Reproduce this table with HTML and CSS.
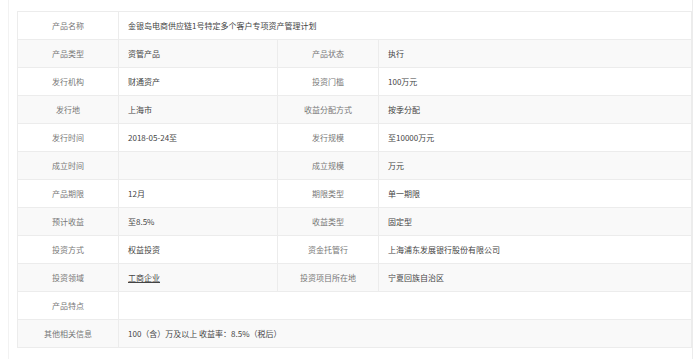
FILE: index.html
```html
<!DOCTYPE html>
<html lang="zh-CN">
    <head>
        <meta charset="UTF-8">
        <meta name="viewport" content="width=device-width, initial-scale=1.0">
        <title>产品详情</title>
        <link rel="stylesheet" href="styles.css">
    </head>
    <body>
        <div class="panel">
            <table class="detail-table">
                <colgroup>
                    <col class="col-label">
                    <col class="col-value">
                    <col class="col-label">
                    <col class="col-value-wide">
                </colgroup>
                <tbody>
                    <tr>
                        <td class="label">产品名称</td>
                        <td colspan="3">金银岛电商供应链1号特定多个客户专项资产管理计划</td>
                    </tr>
                    <tr>
                        <td class="label">产品类型</td>
                        <td>资管产品</td>
                        <td class="label">产品状态</td>
                        <td>执行</td>
                    </tr>
                    <tr>
                        <td class="label">发行机构</td>
                        <td>财通资产</td>
                        <td class="label">投资门槛</td>
                        <td>100万元</td>
                    </tr>
                    <tr>
                        <td class="label">发行地</td>
                        <td>上海市</td>
                        <td class="label">收益分配方式</td>
                        <td>按季分配</td>
                    </tr>
                    <tr>
                        <td class="label">发行时间</td>
                        <td>2018-05-24至</td>
                        <td class="label">发行规模</td>
                        <td>至10000万元</td>
                    </tr>
                    <tr>
                        <td class="label">成立时间</td>
                        <td></td>
                        <td class="label">成立规模</td>
                        <td>万元</td>
                    </tr>
                    <tr>
                        <td class="label">产品期限</td>
                        <td>12月</td>
                        <td class="label">期限类型</td>
                        <td>单一期限</td>
                    </tr>
                    <tr>
                        <td class="label">预计收益</td>
                        <td>至8.5%</td>
                        <td class="label">收益类型</td>
                        <td>固定型</td>
                    </tr>
                    <tr>
                        <td class="label">投资方式</td>
                        <td>权益投资</td>
                        <td class="label">资金托管行</td>
                        <td>上海浦东发展银行股份有限公司</td>
                    </tr>
                    <tr>
                        <td class="label">投资领域</td>
                        <td><a href="#">工商企业</a></td>
                        <td class="label">投资项目所在地</td>
                        <td>宁夏回族自治区</td>
                    </tr>
                    <tr>
                        <td class="label">产品特点</td>
                        <td colspan="3"></td>
                    </tr>
                    <tr>
                        <td class="label">其他相关信息</td>
                        <td colspan="3">100（含）万及以上 收益率：8.5%（税后）</td>
                    </tr>
                </tbody>
            </table>
        </div>
    </body>
</html>
```

FILE: styles.css
```css
* {
    margin: 0;
    padding: 0;
    box-sizing: border-box;
}

body {
    font-family: "Noto Sans CJK SC", "Liberation Sans", sans-serif;
    background: #fff;
    color: #444;
}

.panel {
    margin: 0 7px 0 8px;
    padding: 11px 3px 11px 8px;
    border-left: 1px solid #f2f2f2;
    border-right: 1px solid #ececec;
}

.detail-table {
    width: 674px;
    border-collapse: collapse;
    table-layout: fixed;
    border: 1px solid #ececec;
    font-size: 8px;
}

.col-label {
    width: 101px;
}

.col-value {
    width: 159px;
}

.col-value-wide {
    width: 313px;
}

.detail-table td {
    height: 28px;
    padding: 0 9px;
    border: 1px solid #ececec;
    vertical-align: middle;
    white-space: nowrap;
}

.detail-table tr:nth-child(even) td {
    background: #f9f9f9;
}

.detail-table td.label {
    text-align: center;
    color: #777;
}

.detail-table a {
    color: #444;
    text-decoration: underline;
}
```
